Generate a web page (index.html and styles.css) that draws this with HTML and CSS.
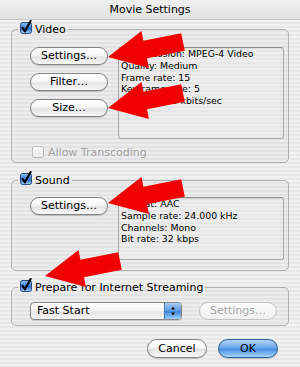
FILE: index.html
```html
<!DOCTYPE html>
<html>
<head>
<meta charset="utf-8">
<link rel="stylesheet" href="styles.css">
</head>
<body>
<div class="window">
  <div class="titlebar">Movie Settings</div>
  <div class="content">
    <fieldset class="group video">
      <legend><svg class="cb" viewBox="0 0 12 12"><rect x="0.5" y="0.5" width="11" height="11" rx="2" fill="url(#cbfill)" stroke="#2b4c80"/><path d="M2.6 5.8 L5 9.3 L10.6 -1" fill="none" stroke="#000" stroke-width="2.1" stroke-linecap="round" stroke-linejoin="round"/></svg><span>Video</span></legend>
      <div class="body video-body">
        <div class="row">
          <div class="btncol">
            <div class="btn">Settings…</div>
            <div class="btn">Filter…</div>
            <div class="btn">Size…</div>
          </div>
          <div class="info video-info">
            <div>Compression: MPEG-4 Video</div>
            <div>Quality: Medium</div>
            <div>Frame rate: 15</div>
            <div>Keyframe rate: 5</div>
            <div>Data rate: 8 kbits/sec</div>
          </div>
        </div>
        <div class="check disabled"><span class="cb-off"></span><span>Allow Transcoding</span></div>
      </div>
    </fieldset>

    <fieldset class="group sound">
      <legend><svg class="cb" viewBox="0 0 12 12"><rect x="0.5" y="0.5" width="11" height="11" rx="2" fill="url(#cbfill)" stroke="#2b4c80"/><path d="M2.6 5.8 L5 9.3 L10.6 -1" fill="none" stroke="#000" stroke-width="2.1" stroke-linecap="round" stroke-linejoin="round"/></svg><span>Sound</span></legend>
      <div class="body sound-body">
        <div class="row">
          <div class="btncol">
            <div class="btn">Settings…</div>
          </div>
          <div class="info sound-info">
            <div>Format: AAC</div>
            <div>Sample rate: 24.000 kHz</div>
            <div>Channels: Mono</div>
            <div>Bit rate: 32 kbps</div>
          </div>
        </div>
      </div>
    </fieldset>

    <fieldset class="group stream">
      <legend><svg class="cb" viewBox="0 0 12 12"><rect x="0.5" y="0.5" width="11" height="11" rx="2" fill="url(#cbfill)" stroke="#2b4c80"/><path d="M2.6 5.8 L5 9.3 L10.6 -1" fill="none" stroke="#000" stroke-width="2.1" stroke-linecap="round" stroke-linejoin="round"/></svg><span>Prepare for Internet Streaming</span></legend>
      <div class="body stream-body">
        <div class="popup">
          <span class="popup-label">Fast Start</span>
          <span class="stepper"><svg viewBox="0 0 16 16" width="16" height="16"><path d="M6 6.5 L8 3.5 L10 6.5 Z M6 9.5 L8 12.5 L10 9.5 Z" fill="#111"/></svg></span>
        </div>
        <div class="btn btn-disabled">Settings…</div>
      </div>
    </fieldset>
  </div>
  <div class="footer">
    <div class="btn btn-cancel">Cancel</div>
    <div class="btn btn-ok">OK</div>
  </div>

  <svg class="arrows" viewBox="0 0 300 367" width="300" height="367">
    <defs>
      <linearGradient id="cbfill" x1="0" y1="0" x2="0" y2="1">
        <stop offset="0" stop-color="#8fbdf0"/>
        <stop offset="0.45" stop-color="#3f86dc"/>
        <stop offset="0.55" stop-color="#2a6fcc"/>
        <stop offset="1" stop-color="#9fd0fb"/>
      </linearGradient>
    </defs>
    <g fill="#f20000">
      <polygon transform="translate(108,57)" points="0,0 33.5,-26.1 35.4,-16.3 73.2,-23.8 76.8,-6.2 39,1.3 40.9,11.1"/>
      <polygon transform="translate(108,108)" points="0,0 33.5,-26.1 35.4,-16.3 73.2,-23.8 76.8,-6.2 39,1.3 40.9,11.1"/>
      <polygon transform="translate(108,203)" points="0,0 33.5,-26.1 35.4,-16.3 73.2,-23.8 76.8,-6.2 39,1.3 40.9,11.1"/>
      <polygon transform="translate(45,276)" points="0,0 33.5,-26.1 35.4,-16.3 73.2,-23.8 76.8,-6.2 39,1.3 40.9,11.1"/>
    </g>
  </svg>
</div>
</body>
</html>
```

FILE: styles.css
```css
* { box-sizing: border-box; }

html, body {
  margin: 0;
  padding: 0;
}

body {
  font-family: "DejaVu Sans", "Open Sans", sans-serif;
  font-size: 11px;
  color: #000;
  background: #ececec;
}

.window {
  position: relative;
  width: 300px;
  height: 367px;
  overflow: hidden;
  background: repeating-linear-gradient(to bottom, #f1f1f1 0, #f1f1f1 2px, #e8e8e8 2px, #e8e8e8 4px);
}

.titlebar {
  height: 20px;
  line-height: 19px;
  text-align: center;
  font-size: 11px;
  background: linear-gradient(to bottom, #f0f0f0, #e2e2e2);
  border-bottom: 1px solid #c6c6c6;
}

.content {
  padding: 2px 11px 0 11px;
  display: flex;
  flex-direction: column;
}

.group {
  margin: 0;
  padding: 0;
  min-width: 0;
  border: 1px solid #b1b1b1;
  border-radius: 5px;
  background: rgba(0, 0, 0, 0.018);
}

.group legend {
  margin-left: 6px;
  padding: 0 2px;
  height: 15px;
  line-height: 15px;
  display: flex;
  align-items: flex-start;
  gap: 3px;
  font-size: 11px;
}

.cb {
  width: 12px;
  height: 12px;
  flex: none;
  overflow: visible;
  display: block;
}

.sound { margin-top: 10px; }
.stream { margin-top: 9px; }

.body {
  padding-left: 18px;
  padding-right: 4px;
}

.video-body { padding-top: 10px; padding-bottom: 3px; }
.sound-body { padding-top: 9px; padding-bottom: 10px; }
.stream-body {
  padding-top: 7px;
  padding-bottom: 5px;
  display: flex;
  align-items: flex-start;
  gap: 17px;
}

.row {
  display: flex;
  gap: 10px;
  align-items: flex-start;
}

.btncol {
  display: flex;
  flex-direction: column;
  gap: 8px;
}

.btn {
  width: 78px;
  height: 18px;
  line-height: 16px;
  text-align: center;
  font-size: 11px;
  border: 1px solid #848484;
  border-radius: 9px;
  background: linear-gradient(to bottom, #ffffff 0%, #f6f6f6 45%, #e4e4e4 55%, #f7f7f7 100%);
  box-shadow: 0 1px 1px rgba(0, 0, 0, 0.18);
}

.info {
  width: 166px;
  border: 1px solid #a8a8a8;
  border-top-color: #8e8e8e;
  border-radius: 3px;
  box-shadow: inset 0 1px 1px rgba(0, 0, 0, 0.08);
  padding: 0 2px 0 2px;
  font-size: 9.4px;
  line-height: 11.8px;
  background: rgba(255, 255, 255, 0.12);
}

.video-info { height: 92px; }
.sound-info { height: 63px; }

.check {
  display: flex;
  align-items: center;
  gap: 4px;
  height: 14px;
  margin-top: 6px;
  margin-left: 2px;
  font-size: 11px;
}

.check.disabled { color: #a4a4a4; }

.cb-off {
  width: 12px;
  height: 12px;
  border: 1px solid #bdbdbd;
  border-radius: 2px;
  background: linear-gradient(to bottom, #fbfbfb, #e9e9e9);
}

.popup {
  width: 152px;
  height: 18px;
  display: flex;
  border: 1px solid #878787;
  border-radius: 4px;
  background: linear-gradient(to bottom, #ffffff 0%, #f4f4f4 50%, #e6e6e6 55%, #f5f5f5 100%);
  box-shadow: 0 1px 1px rgba(0, 0, 0, 0.15);
  overflow: hidden;
}

.popup-label {
  flex: 1;
  padding-left: 6px;
  line-height: 16px;
  font-size: 11px;
}

.stepper {
  width: 17px;
  display: flex;
  align-items: center;
  justify-content: center;
  border-left: 1px solid #4a78b4;
  background: linear-gradient(to bottom, #a8ccf3 0%, #5d9ce4 48%, #3f85da 52%, #9fd1fb 100%);
}

.stepper svg { display: block; }

.btn-disabled {
  color: #a8a8a8;
  border-color: #c2c2c2;
  background: linear-gradient(to bottom, #fbfbfb, #f0f0f0);
  box-shadow: none;
}

.footer {
  margin-top: 13px;
  display: flex;
  justify-content: flex-end;
  gap: 11px;
  padding-right: 22px;
}

.btn-cancel,
.btn-ok {
  width: 60px;
  height: 19px;
  line-height: 17px;
  border-radius: 10px;
}

.btn-ok {
  border-color: #2f5c98;
  background: linear-gradient(to bottom, #b3d4f6 0%, #6aa6e8 45%, #4a8fe0 55%, #a6d6fc 100%);
}

.arrows {
  position: absolute;
  left: 0;
  top: 0;
  pointer-events: none;
}
```
